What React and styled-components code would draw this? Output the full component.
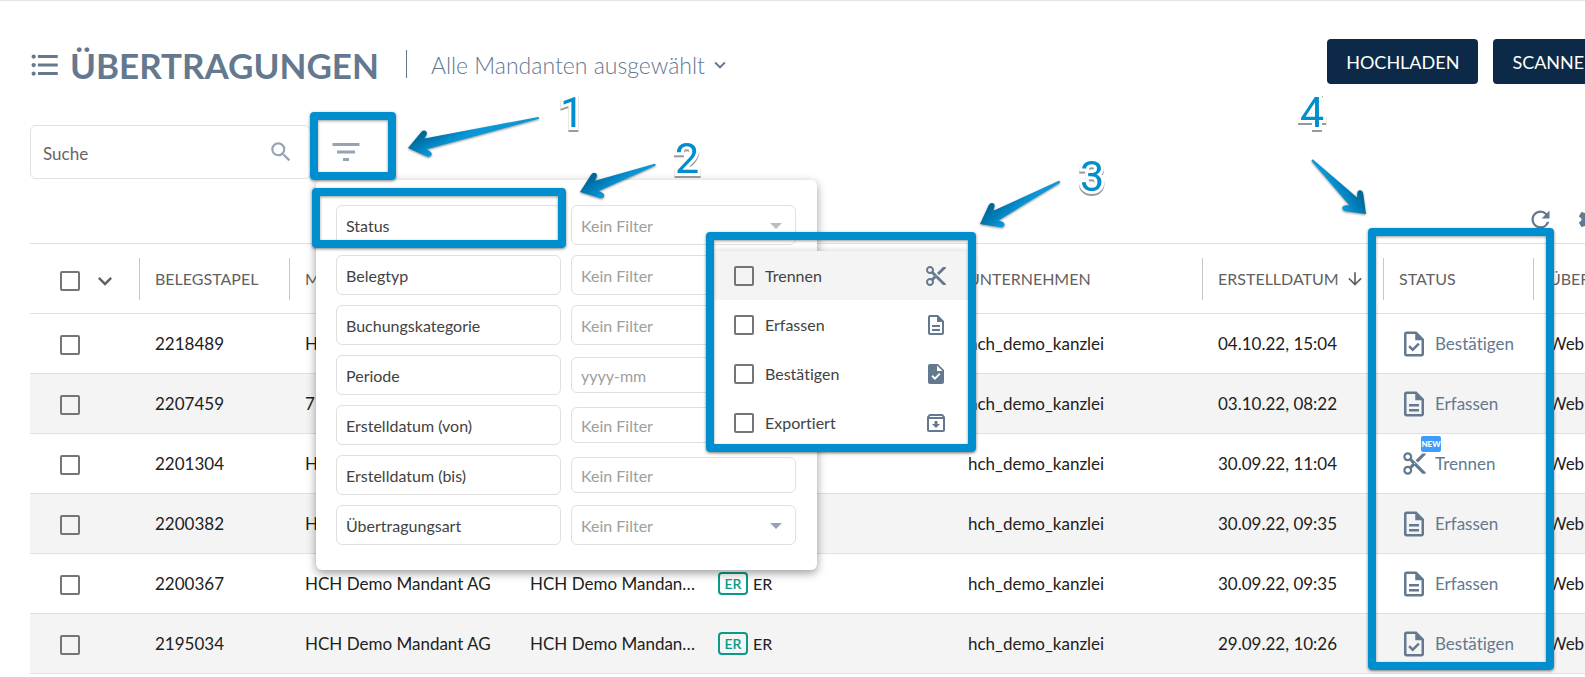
import { useState } from "react";
import styled, { createGlobalStyle } from "styled-components";
import {
  MdArrowDownward,
  MdContentCut,
  MdExpandMore,
  MdFilterList,
  MdFormatListBulleted,
  MdOutlineArchive,
  MdOutlineDescription,
  MdOutlineTask,
  MdRefresh,
  MdSearch,
  MdSettings,
  MdTask,
} from "react-icons/md";

const GlobalStyle = createGlobalStyle`
  * {
    box-sizing: border-box;
  }
  body {
    margin: 0;
    background: #fff;
    color: #212121;
    font-family: Lato, "Open Sans", sans-serif;
    font-size: 17px;
    font-variant-ligatures: none;
  }
  button, input, select {
    font-family: inherit;
  }
`;

const Page = styled.main`
  position: relative;
  min-height: 100vh;
  overflow: hidden;
  border-top: 1px solid #e4e4e4;
`;
const Content = styled.div`
  min-width: 1617px;
  padding: 38px 0 0 30px;
`;

const Header = styled.header`
  display: flex;
  align-items: flex-start;
  justify-content: space-between;
  height: 45px;
`;
const TitleGroup = styled.div`
  display: flex;
  align-items: center;
  padding-top: 6px;
  color: #64798f;

  > svg {
    margin: 0 8px 0 -2px;
  }
`;
const Title = styled.h1`
  margin: 0;
  font-size: 35px;
  line-height: 40px;
  font-weight: 700;
`;
const Separator = styled.span`
  width: 1px;
  height: 28px;
  margin: 0 24px 2px 27px;
  background: #64798f;
`;
const ClientButton = styled.button`
  display: flex;
  align-items: center;
  gap: 4px;
  padding: 0;
  border: none;
  background: none;
  color: #64798f;
  font-size: 23px;
  line-height: 30px;
  font-weight: 300;
  cursor: pointer;
`;
const Actions = styled.div`
  display: flex;
  gap: 15px;
`;
const ActionButton = styled.button`
  height: 45px;
  padding: 0 19px;
  border: none;
  border-radius: 4px;
  background: #0d2948;
  color: #fff;
  font-size: 18px;
  cursor: pointer;
`;

const SearchRow = styled.div`
  position: relative;
  z-index: 2;
  display: flex;
  height: 54px;
  margin-top: 41px;
`;
const SearchBox = styled.label`
  display: flex;
  align-items: center;
  width: 281px;
  padding: 0 16px 0 12px;
  border: 1px solid #e0e0e0;
  border-radius: 6px;
  color: #97a3b4;
`;
const SearchInput = styled.input`
  flex: 1;
  min-width: 0;
  padding: 2px 0 0;
  border: none;
  outline: none;
  font-size: 17px;

  &::placeholder {
    color: #666;
  }
`;
const FilterArea = styled.div`
  position: relative;
`;
const FilterButton = styled.button`
  display: flex;
  align-items: center;
  justify-content: center;
  width: 70px;
  height: 54px;
  padding: 0;
  border: none;
  background: none;
  color: #97a3b4;
  cursor: pointer;
`;
const FilterPanel = styled.div`
  position: absolute;
  top: 55px;
  left: 5px;
  display: flex;
  flex-direction: column;
  gap: 10px;
  width: 501px;
  padding: 25px 21px 25px 20px;
  border-radius: 6px;
  background: #fff;
  box-shadow: 0 3px 10px rgba(0, 0, 0, 0.4);
`;
const FilterRow = styled.div`
  display: grid;
  grid-template-columns: 1fr 1fr;
  align-items: center;
  gap: 10px;
  height: 40px;
`;
const FilterLabel = styled.label`
  height: 40px;
  padding: 2px 9px 0;
  border: 1px solid #e0e0e0;
  border-radius: 6px;
  color: #424242;
  font-size: 16px;
  line-height: 36px;
`;
const Field = styled.div`
  position: relative;
`;
const FilterInput = styled.input`
  display: block;
  width: 100%;
  height: 36px;
  padding: 0 9px;
  border: 1px solid #e0e0e0;
  border-radius: 6px;
  outline: none;
  font-size: 16px;

  &::placeholder {
    color: #9e9e9e;
  }
`;
const FilterSelect = styled.select`
  display: block;
  width: 100%;
  height: 40px;
  padding: 0 9px;
  border: 1px solid #e0e0e0;
  border-radius: 6px;
  appearance: none;
  background: #fff;
  color: #9e9e9e;
  font-size: 16px;
`;
const Caret = styled.span`
  position: absolute;
  top: 18px;
  right: 14px;
  border: 6px solid transparent;
  border-top-color: ${(props) => (props.$muted ? "#bdbdbd" : "#97a3b4")};
  border-bottom: none;
  pointer-events: none;
`;

const OptionMenu = styled.div`
  position: absolute;
  z-index: 1;
  top: 46px;
  left: 141px;
  width: 258px;
  border-radius: 4px;
  background: #fff;
  box-shadow: 0 2px 8px rgba(0, 0, 0, 0.3);
`;
const Option = styled.label`
  display: flex;
  align-items: center;
  height: 49px;
  padding: 0 22px;
  background: ${(props) => (props.$active ? "#f4f4f4" : "#fff")};
  color: #424242;
  font-size: 16px;

  svg {
    margin-left: auto;
    color: #64798f;
  }
`;
const OptionText = styled.span`
  margin-left: 11px;
`;
const Checkbox = styled.input`
  appearance: none;
  display: block;
  flex: none;
  width: 20px;
  height: 20px;
  margin: 0;
  border: 2px solid #757575;
  border-radius: 2px;

  &:checked {
    background: #757575;
  }
`;

const Toolbar = styled.div`
  display: flex;
  align-items: center;
  justify-content: flex-end;
  gap: 22px;
  height: 64px;
  padding: 16px 14px 0 0;
`;
const IconButton = styled.button`
  display: flex;
  padding: 0;
  border: none;
  background: none;
  color: #64798f;
  cursor: pointer;
`;

const Table = styled.table`
  width: 100%;
  min-width: 1680px;
  table-layout: fixed;
  border-collapse: collapse;
  border-top: 1px solid #e0e0e0;
`;
const Col = styled.col`
  width: ${(props) => (props.$width ? props.$width + "px" : "auto")};
`;
const Th = styled.th`
  height: 70px;
  padding: 0;
  border-bottom: 1px solid #e0e0e0;
  color: #616161;
  font-size: 16px;
  font-weight: 400;
  text-align: left;
  white-space: nowrap;
`;
const ThInner = styled.div`
  display: flex;
  align-items: center;
  gap: 6px;
  height: 42px;
  padding-left: 15px;
  border-left: 1px solid #c8c8c8;
  overflow: hidden;
`;
const SelectAll = styled.div`
  display: flex;
  align-items: center;
  gap: 11px;
  padding: 4px 0 0 30px;
`;
const Tr = styled.tr`
  &:nth-child(even) {
    background: #f4f4f4;
  }
`;
const Td = styled.td`
  height: 60px;
  padding: 0 4px 0 16px;
  border-bottom: 1px solid #e0e0e0;
  overflow: hidden;
  text-overflow: ellipsis;
  white-space: nowrap;
`;
const CheckTd = styled(Td)`
  padding: 3px 0 0 30px;
`;
const TypeCell = styled.span`
  display: flex;
  align-items: center;
  gap: 5px;
  font-size: 16px;
`;
const TypeBadge = styled.span`
  width: 30px;
  border: 2px solid #0a9b86;
  border-radius: 4px;
  color: #0a9b86;
  font-size: 14px;
  line-height: 19px;
  font-weight: 600;
  text-align: center;
`;
const Status = styled.span`
  position: relative;
  display: flex;
  align-items: center;
  gap: 6px;
  color: #64798f;
`;
const StatusIcon = styled.span`
  display: flex;
  justify-content: center;
  width: 30px;
`;
const NewBadge = styled.span`
  position: absolute;
  top: -14px;
  left: 22px;
  width: 20px;
  border-radius: 2px;
  background: #3f9cff;
  color: #fff;
  font-size: 8px;
  line-height: 16px;
  font-weight: 900;
  text-align: center;
`;

const Frame = styled.div`
  position: absolute;
  z-index: 3;
  top: ${(props) => props.$top}px;
  left: ${(props) => props.$left}px;
  width: ${(props) => props.$width}px;
  height: ${(props) => props.$height}px;
  border: 8px solid #008ecf;
  border-radius: 4px;
  box-shadow: 0 1px 3px rgba(0, 0, 0, 0.5), inset 0 1px 3px rgba(0, 0, 0, 0.4);
  pointer-events: none;
`;
const Digit = styled.span`
  position: absolute;
  z-index: 3;
  top: ${(props) => props.$top}px;
  left: ${(props) => props.$left}px;
  color: #008ecf;
  font-family: Roboto, Arial, sans-serif;
  font-size: 43px;
  line-height: 48px;
  text-shadow: 0 2px 0 #fff;
  -webkit-text-stroke: 6px #fff;
  paint-order: stroke fill;
  filter: drop-shadow(0 2px 0 #999);
`;
const ArrowSvg = styled.svg`
  position: absolute;
  z-index: 3;
  top: ${(props) => props.$top}px;
  left: ${(props) => props.$left}px;
  overflow: visible;
  filter: drop-shadow(0 1px 1px rgba(0, 0, 0, 0.45));
  pointer-events: none;
`;

const filters = [
  { id: "status", label: "Status", type: "select", muted: true },
  { id: "belegtyp", label: "Belegtyp", type: "select" },
  { id: "kategorie", label: "Buchungskategorie", type: "select" },
  { id: "periode", label: "Periode", placeholder: "yyyy-mm" },
  { id: "von", label: "Erstelldatum (von)", placeholder: "Kein Filter" },
  { id: "bis", label: "Erstelldatum (bis)", placeholder: "Kein Filter" },
  { id: "art", label: "Übertragungsart", type: "select" },
];

const options = [
  { label: "Trennen", Icon: MdContentCut },
  { label: "Erfassen", Icon: MdOutlineDescription },
  { label: "Bestätigen", Icon: MdTask },
  { label: "Exportiert", Icon: MdOutlineArchive },
];

const statusIcons = {
  Bestätigen: <MdOutlineTask size={30} />,
  Erfassen: <MdOutlineDescription size={30} />,
  Trennen: <MdContentCut size={27} />,
};

const rows = [
  { id: "2218489", mandant: "HCH Demo Mandant AG", date: "04.10.22, 15:04", status: "Bestätigen" },
  { id: "2207459", mandant: "7", date: "03.10.22, 08:22", status: "Erfassen" },
  { id: "2201304", mandant: "HCH Demo Mandant AG", date: "30.09.22, 11:04", status: "Trennen", isNew: true },
  { id: "2200382", mandant: "HCH Demo Mandant AG", date: "30.09.22, 09:35", status: "Erfassen" },
  { id: "2200367", mandant: "HCH Demo Mandant AG", date: "30.09.22, 09:35", status: "Erfassen" },
  { id: "2195034", mandant: "HCH Demo Mandant AG", date: "29.09.22, 10:26", status: "Bestätigen" },
];

const widths = [109, 150, 225, 188, 250, 250, 181, 150, null];

// The tip sits at top/left, the shaft runs from there in the direction of angle
const Arrow = ({ id, top, left, length, angle, flip }) => (
  <ArrowSvg $top={top} $left={left} width="1" height="1" aria-hidden="true">
    <defs>
      <linearGradient id={id} gradientUnits="userSpaceOnUse" x1="10" y1="-12" x2="16" y2="12">
        <stop offset="0" stopColor="#00628f" />
        <stop offset="0.55" stopColor="#007db8" />
        <stop offset="1" stopColor="#0a97d8" />
      </linearGradient>
    </defs>
    <g transform={`rotate(${angle}) scale(1 ${flip ? -1 : 1})`}>
      <path
        fill={`url(#${id})`}
        d={`M0 0 L16.5 -12.5 Q19.5 -14.5 21.5 -12 Q22.5 -10 20.5 -8 L18 -5.5 L${length} -1 Q${length + 1} 0 ${length} 1 L18 5.5 L20.5 8 Q22.5 10 21.5 12 Q19.5 14.5 16.5 12.5 Z`}
      />
    </g>
  </ArrowSvg>
);

const App = () => {
  const [search, setSearch] = useState("");

  return (
    <>
      <GlobalStyle />
      <Page>
        <Content>
          <Header>
            <TitleGroup>
              <MdFormatListBulleted size={34} />
              <Title>ÜBERTRAGUNGEN</Title>
              <Separator />
              <ClientButton type="button">
                Alle Mandanten ausgewählt
                <MdExpandMore size={22} />
              </ClientButton>
            </TitleGroup>
            <Actions>
              <ActionButton type="button">HOCHLADEN</ActionButton>
              <ActionButton type="button">SCANNEN</ActionButton>
            </Actions>
          </Header>

          <SearchRow>
            <SearchBox>
              <SearchInput
                type="text"
                aria-label="Suche"
                placeholder="Suche"
                value={search}
                onChange={(e) => setSearch(e.target.value)}
              />
              <MdSearch size={26} />
            </SearchBox>
            <FilterArea>
              <FilterButton type="button" aria-label="Filter">
                <MdFilterList size={36} />
              </FilterButton>
              <FilterPanel>
                {filters.map((filter) => (
                  <FilterRow key={filter.id}>
                    <FilterLabel htmlFor={filter.id}>{filter.label}</FilterLabel>
                    <Field>
                      {filter.type === "select" ? (
                        <>
                          <FilterSelect id={filter.id}>
                            <option>Kein Filter</option>
                          </FilterSelect>
                          <Caret $muted={filter.muted} />
                        </>
                      ) : (
                        <FilterInput id={filter.id} type="text" placeholder={filter.placeholder} />
                      )}
                      {filter.id === "status" && (
                        <OptionMenu>
                          {options.map(({ label, Icon }, index) => (
                            <Option key={label} $active={index === 0}>
                              <Checkbox type="checkbox" />
                              <OptionText>{label}</OptionText>
                              <Icon size={24} />
                            </Option>
                          ))}
                        </OptionMenu>
                      )}
                    </Field>
                  </FilterRow>
                ))}
              </FilterPanel>
            </FilterArea>
          </SearchRow>

          <Toolbar>
            <IconButton type="button" aria-label="Aktualisieren">
              <MdRefresh size={27} />
            </IconButton>
            <IconButton type="button" aria-label="Einstellungen">
              <MdSettings size={27} />
            </IconButton>
          </Toolbar>

          <Table>
            <colgroup>
              {widths.map((width, index) => (
                <Col key={index} $width={width} />
              ))}
            </colgroup>
            <thead>
              <tr>
                <Th>
                  <SelectAll>
                    <Checkbox type="checkbox" aria-label="Alle auswählen" />
                    <MdExpandMore size={28} />
                  </SelectAll>
                </Th>
                <Th><ThInner>BELEGSTAPEL</ThInner></Th>
                <Th><ThInner>MANDANT</ThInner></Th>
                <Th />
                <Th />
                <Th><ThInner>UNTERNEHMEN</ThInner></Th>
                <Th>
                  <ThInner>
                    ERSTELLDATUM
                    <MdArrowDownward size={20} />
                  </ThInner>
                </Th>
                <Th><ThInner>STATUS</ThInner></Th>
                <Th><ThInner>ÜBERTRAGUNGSART</ThInner></Th>
              </tr>
            </thead>
            <tbody>
              {rows.map((row) => (
                <Tr key={row.id}>
                  <CheckTd>
                    <Checkbox type="checkbox" aria-label={row.id} />
                  </CheckTd>
                  <Td>{row.id}</Td>
                  <Td>{row.mandant}</Td>
                  <Td>HCH Demo Mandant AG</Td>
                  <Td>
                    <TypeCell>
                      <TypeBadge>ER</TypeBadge>
                      ER
                    </TypeCell>
                  </Td>
                  <Td>hch_demo_kanzlei</Td>
                  <Td>{row.date}</Td>
                  <Td>
                    <Status>
                      <StatusIcon>{statusIcons[row.status]}</StatusIcon>
                      {row.status}
                      {row.isNew && <NewBadge>NEW</NewBadge>}
                    </Status>
                  </Td>
                  <Td>Web</Td>
                </Tr>
              ))}
            </tbody>
          </Table>
        </Content>

        <Frame $top={111} $left={310} $width={86} $height={68} />
        <Frame $top={187} $left={312} $width={254} $height={60} />
        <Frame $top={231} $left={706} $width={270} $height={220} />
        <Frame $top={227} $left={1368} $width={186} $height={442} />

        <Arrow id="arrow1" top={147} left={408} length={134} angle={-13} />
        <Arrow id="arrow2" top={191} left={580} length={80} angle={-20} />
        <Arrow id="arrow3" top={223} left={980} length={90} angle={-28} />
        <Arrow id="arrow4" top={213} left={1366} length={76} angle={-135} flip />

        <Digit $top={87} $left={560}>1</Digit>
        <Digit $top={133} $left={675}>2</Digit>
        <Digit $top={151} $left={1080}>3</Digit>
        <Digit $top={87} $left={1300}>4</Digit>
      </Page>
    </>
  );
};

export default App;
